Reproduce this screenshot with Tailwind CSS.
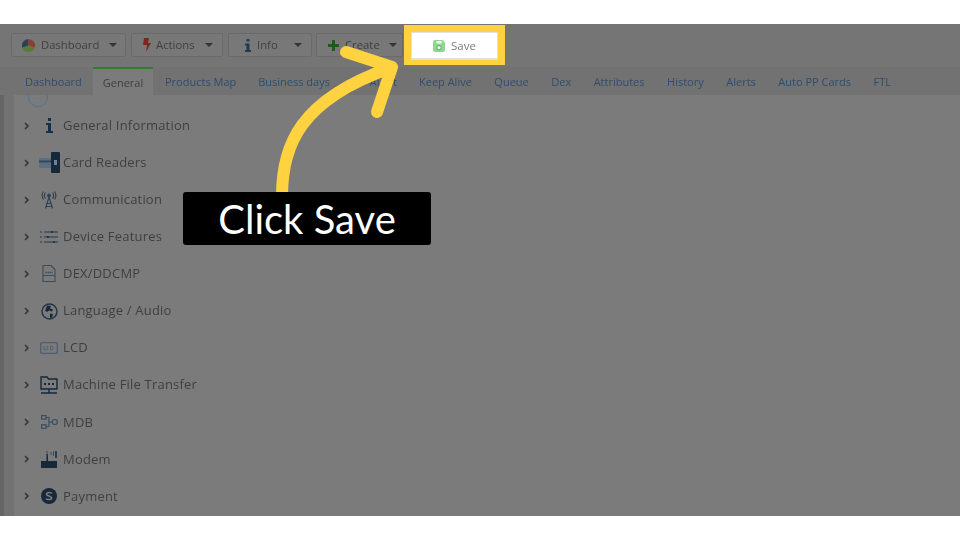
<!DOCTYPE html>
<html lang="en">
<head>
  <meta charset="UTF-8" />
  <title>Click Save</title>
  <script src="https://cdn.jsdelivr.net/npm/@tailwindcss/browser@4"></script>
</head>
<body class="bg-white">
<div class="relative w-[960px] h-[540px] overflow-hidden bg-white font-['Open_Sans',sans-serif]">
  <div class="h-[24px]"></div>

  <!-- dimmed app screenshot -->
  <div class="h-[492px] overflow-hidden bg-[#757575]">
    <div class="blur-[0.6px]">
      <!-- toolbar -->
      <div class="flex gap-[5px] pl-[11px] pt-[9px] h-[43px] text-[11.3px] text-[#3f3f3f]">
        <div class="w-[115px] h-[24px] flex items-center border border-[#6a6a6a] rounded-[2px] bg-[#787878] pl-[9px]">
          <svg class="w-[15px] h-[15px]" viewBox="0 0 16 16">
            <path d="M8 1a7 7 0 0 0-6.600 9.300L8 8z" fill="#2b3f55"/>
            <path d="M8 1v7l6.600 2.300A7 7 0 0 0 8 1z" fill="#8a4030"/>
            <path d="M1.400 10.300A7 7 0 0 0 14.600 10.300L8 8z" fill="#5a7a3c"/>
          </svg>
          <span class="ml-[5px]">Dashboard</span>
          <span class="ml-[10px] w-0 h-0 border-x-[4px] border-x-transparent border-t-[4px] border-t-[#333]"></span>
        </div>
        <div class="w-[92px] h-[24px] flex items-center border border-[#6a6a6a] rounded-[2px] bg-[#787878] pl-[11px]">
          <svg class="w-[8px] h-[14px]" viewBox="0 0 8 14"><path d="M1 0h5L5 5h3L3 14l1-7H0z" fill="#7a2a1c"/></svg>
          <span class="ml-[5px]">Actions</span>
          <span class="ml-[10px] w-0 h-0 border-x-[4px] border-x-transparent border-t-[4px] border-t-[#333]"></span>
        </div>
        <div class="w-[84px] h-[24px] flex items-center border border-[#6a6a6a] rounded-[2px] bg-[#787878] pl-[16px]">
          <svg class="w-[6px] h-[13px]" viewBox="0 0 6 13"><path d="M1.500 0h3v2.600h-3zM0 4.500h4.500v6.500H6v2H0v-2h1.500V6.500H0z" fill="#1d3a55"/></svg>
          <span class="ml-[6px]">Info</span>
          <span class="ml-[16px] w-0 h-0 border-x-[4px] border-x-transparent border-t-[4px] border-t-[#333]"></span>
        </div>
        <div class="ml-[-1px] w-[87px] h-[24px] flex items-center border border-[#6a6a6a] rounded-[2px] bg-[#787878] pl-[11px]">
          <svg class="w-[11px] h-[11px]" viewBox="0 0 11 11"><path d="M4 0h3v4h4v3H7v4H4V7H0V4h4z" fill="#1f5a1f"/></svg>
          <span class="ml-[6px]">Create</span>
          <span class="ml-[9px] w-0 h-0 border-x-[4px] border-x-transparent border-t-[4px] border-t-[#333]"></span>
        </div>
      </div>

      <!-- tabs -->
      <div class="flex items-stretch h-[28px] bg-[#727272] text-[11px] text-[#2f4d6c]">
        <span class="pl-[25px] w-[93px] pt-[7px]">Dashboard</span>
        <span class="w-[60px] border-t-2 border-[#2f7d2f] bg-[#7b7b7b] text-[#3f3f3f] text-center pt-[6px]">General</span>
        <span class="ml-[12px] pt-[7px]">Products Map</span>
        <span class="ml-[22px] pt-[7px]">Business days</span>
        <span class="ml-[22px] w-[45px] pt-[7px] text-right">Audit</span>
        <span class="ml-[22px] pt-[7px]">Keep Alive</span>
        <span class="ml-[22.500px] pt-[7px]">Queue</span>
        <span class="ml-[22.500px] pt-[7px]">Dex</span>
        <span class="ml-[22.500px] pt-[7px]">Attributes</span>
        <span class="ml-[22.500px] pt-[7px]">History</span>
        <span class="ml-[22.500px] pt-[7px]">Alerts</span>
        <span class="ml-[22.500px] pt-[7px]">Auto PP Cards</span>
        <span class="ml-[22.500px] pt-[7px]">FTL</span>
      </div>

      <!-- settings list -->
      <div class="flex h-[421px]">
        <div class="w-[4px] bg-[#656565]"></div>
        <div class="w-[10px] bg-[#727272]"></div>
        <div class="flex-1 bg-[#7b7b7b] text-[13px] text-[#3f3f3f] tracking-[0.2px]">
          <div class="h-[12px] overflow-hidden pl-[13px]">
            <svg class="w-[22px] h-[12px]" viewBox="0 0 22 12" fill="none">
              <circle cx="11" cy="2" r="9.500" stroke="#56718c"/>
              <path d="M7 3h1M10.500 3h1M14 3h1" stroke="#56718c"/>
            </svg>
          </div>

          <div class="flex items-center h-[37.100px]">
            <svg class="ml-[10px] w-[6px] h-[8px]" viewBox="0 0 6 8" fill="none"><path d="M1 1l3 3-3 3" stroke="#333" stroke-width="1.500"/></svg>
            <span class="w-[33px] pl-[5px] flex justify-center"><svg class="w-[7px] h-[15px]" viewBox="0 0 7 15"><path d="M2 0h3v3H2zM0 5h5v8h2v2H0v-2h2V7H0z" fill="#16304a"/></svg></span>
            <span>General Information</span>
          </div>
          <div class="flex items-center h-[37.100px]">
            <svg class="ml-[10px] w-[6px] h-[8px]" viewBox="0 0 6 8" fill="none"><path d="M1 1l3 3-3 3" stroke="#333" stroke-width="1.500"/></svg>
            <span class="w-[33px] pl-[5px] flex justify-center"><svg class="w-[21px] h-[21px]" viewBox="0 0 21 21"><rect x="0" y="6" width="14" height="10" rx="1" fill="#5b6f82"/><rect x="0" y="8.500" width="14" height="2" fill="#35495c"/><rect x="12" y="0" width="9" height="21" rx="1" fill="#16293b"/><rect x="15" y="8" width="3" height="5" fill="#6d8296"/></svg></span>
            <span>Card Readers</span>
          </div>
          <div class="flex items-center h-[37.100px]">
            <svg class="ml-[10px] w-[6px] h-[8px]" viewBox="0 0 6 8" fill="none"><path d="M1 1l3 3-3 3" stroke="#333" stroke-width="1.500"/></svg>
            <span class="w-[33px] pl-[5px] flex justify-center"><svg class="w-[16px] h-[18px]" viewBox="0 0 16 18" fill="none" stroke="#2f4356" stroke-width="1.200"><path d="M4.500 1.500a5 5 0 0 0 0 6M2.500 0.500a7 7 0 0 0 0 8M11.500 1.500a5 5 0 0 1 0 6M13.500 0.500a7 7 0 0 1 0 8M8 6L4.500 17.500M8 6l3.500 11.500M6 12.500h4M5 15.500h6"/><circle cx="8" cy="4.500" r="1.300" fill="#2f4356"/></svg></span>
            <span>Communication</span>
          </div>
          <div class="flex items-center h-[37.100px]">
            <svg class="ml-[10px] w-[6px] h-[8px]" viewBox="0 0 6 8" fill="none"><path d="M1 1l3 3-3 3" stroke="#333" stroke-width="1.500"/></svg>
            <span class="w-[33px] pl-[5px] flex justify-center"><svg class="w-[18px] h-[12px]" viewBox="0 0 18 12" fill="none" stroke="#24384a" stroke-width="1.200"><path d="M0 1h2M4 1h14M0 6h2M4 6h14M0 11h2M4 11h14"/><path d="M12 0v2M8 5v2M14 10v2" stroke-width="2"/></svg></span>
            <span>Device Features</span>
          </div>
          <div class="flex items-center h-[37.100px]">
            <svg class="ml-[10px] w-[6px] h-[8px]" viewBox="0 0 6 8" fill="none"><path d="M1 1l3 3-3 3" stroke="#333" stroke-width="1.500"/></svg>
            <span class="w-[33px] pl-[5px] flex justify-center"><svg class="w-[14px] h-[17px]" viewBox="0 0 14 17" fill="none" stroke="#3a4d5e" stroke-width="1.100"><path d="M1 .500h8l4 4v12H1zM1 10.500h12"/><path d="M3.500 7.500h7" stroke-width="1.500" stroke-dasharray="1.500 .5"/></svg></span>
            <span>DEX/DDCMP</span>
          </div>
          <div class="flex items-center h-[37.100px]">
            <svg class="ml-[10px] w-[6px] h-[8px]" viewBox="0 0 6 8" fill="none"><path d="M1 1l3 3-3 3" stroke="#333" stroke-width="1.500"/></svg>
            <span class="w-[33px] pl-[5px] flex justify-center"><svg class="w-[17px] h-[17px]" viewBox="0 0 17 17"><circle cx="8.500" cy="8.500" r="7.500" fill="#7b7b7b" stroke="#223648" stroke-width="1.500"/><path d="M6 2.500l4 .5-1 2.500 3 1-1 2-3-1-2 1.500-2-1.500L5 5.500zM9 10.500l3 .5-1 3.500-2 .5z" fill="#16293b"/></svg></span>
            <span>Language / Audio</span>
          </div>
          <div class="flex items-center h-[37.100px]">
            <svg class="ml-[10px] w-[6px] h-[8px]" viewBox="0 0 6 8" fill="none"><path d="M1 1l3 3-3 3" stroke="#333" stroke-width="1.500"/></svg>
            <span class="w-[33px] pl-[5px] flex justify-center"><svg class="w-[18px] h-[12px]" viewBox="0 0 18 12" fill="none" stroke="#4c5f71" stroke-width="1.300"><rect x=".7" y=".7" width="16.600" height="10.600" rx="1"/><path d="M4 4v4h2M8.500 4.300h-1.500v3.400h1.500M10.500 4v4h1.500l1-1V5l-1-1z" stroke-width=".8"/></svg></span>
            <span>LCD</span>
          </div>
          <div class="flex items-center h-[37.100px]">
            <svg class="ml-[10px] w-[6px] h-[8px]" viewBox="0 0 6 8" fill="none"><path d="M1 1l3 3-3 3" stroke="#333" stroke-width="1.500"/></svg>
            <span class="w-[33px] pl-[5px] flex justify-center"><svg class="w-[18px] h-[19px]" viewBox="0 0 18 19" fill="none" stroke="#16293b" stroke-width="1.400"><path d="M1 1h6l1.500 2H17v10H1z"/><path d="M9 13v4M1 17h16"/><path d="M4 8h2M8 8h2M12 8h2" stroke-width="2"/></svg></span>
            <span>Machine File Transfer</span>
          </div>
          <div class="flex items-center h-[37.100px]">
            <svg class="ml-[10px] w-[6px] h-[8px]" viewBox="0 0 6 8" fill="none"><path d="M1 1l3 3-3 3" stroke="#333" stroke-width="1.500"/></svg>
            <span class="w-[33px] pl-[5px] flex justify-center"><svg class="w-[17px] h-[14px]" viewBox="0 0 17 14" fill="none" stroke="#3a4d5e" stroke-width="1.200"><rect x=".6" y=".6" width="4.500" height="3.500"/><rect x=".6" y="9.800" width="4.500" height="3.500"/><circle cx="13.800" cy="7" r="2.500"/><path d="M5 2.500h3v9H5M8 7h3.500"/></svg></span>
            <span>MDB</span>
          </div>
          <div class="flex items-center h-[37.100px]">
            <svg class="ml-[10px] w-[6px] h-[8px]" viewBox="0 0 6 8" fill="none"><path d="M1 1l3 3-3 3" stroke="#333" stroke-width="1.500"/></svg>
            <span class="w-[33px] pl-[5px] flex justify-center"><svg class="w-[17px] h-[19px]" viewBox="0 0 17 19"><rect x="0" y="11" width="16" height="7" fill="#16293b"/><path d="M5.500 4h1.500v8H5.500z" fill="#16293b"/><path d="M15 1v7" stroke="#16293b" stroke-width="1.500"/><path d="M6 1v5M10 2v3M12.500 1v5" stroke="#3a4d5e"/></svg></span>
            <span>Modem</span>
          </div>
          <div class="flex items-center h-[37.100px]">
            <svg class="ml-[10px] w-[6px] h-[8px]" viewBox="0 0 6 8" fill="none"><path d="M1 1l3 3-3 3" stroke="#333" stroke-width="1.500"/></svg>
            <span class="w-[33px] pl-[5px] flex justify-center"><svg class="w-[16px] h-[16px]" viewBox="0 0 16 16"><circle cx="8" cy="8" r="8" fill="#16293b"/><path d="M11 5.500C10.500 4.300 6 3.700 5.500 5.800 5 8 11 8 10.700 10.200 10.400 12.200 5.500 11.800 5 10.500" fill="none" stroke="#7b7b7b" stroke-width="1.500"/></svg></span>
            <span>Payment</span>
          </div>
        </div>
      </div>
    </div>
  </div>

  <!-- tutorial annotations, over the screenshot -->
  <div class="absolute left-[404px] top-[25px] w-[101px] h-[40px] border-x-[7px] border-t-[7px] border-b-[5px] border-[#ffd23f] bg-[#dfe3df]">
    <div class="w-[85px] h-[25px] ml-[1px] mt-[1px] bg-white flex items-center justify-center gap-[6px] text-[11.500px] text-[#7a7a7a] blur-[0.4px]">
      <svg class="w-[12px] h-[12px]" viewBox="0 0 12 12"><path d="M2 0h7.500L12 2.500V10a2 2 0 0 1-2 2H2a2 2 0 0 1-2-2V2a2 2 0 0 1 2-2z" fill="#8fd98f"/><rect x="3.500" y="1" width="5" height="2.500" fill="#f2fbf2"/><circle cx="6" cy="7.800" r="2.200" fill="#f2fbf2" stroke="#4fa84f"/></svg>
      <span>Save</span>
    </div>
  </div>
  <svg class="absolute left-0 top-0 w-[960px] h-[540px] pointer-events-none" viewBox="0 0 960 540" fill="none" stroke="#ffd23f" stroke-width="12" stroke-linecap="round" stroke-linejoin="round">
    <path d="M282 196C282 145 300 100 390 68" stroke-linecap="butt"/>
    <path d="M346 52L392 67L377 112"/>
  </svg>
  <div class="absolute left-[183px] top-[192px] w-[248px] h-[53px] bg-black rounded-[3px] flex items-center justify-center font-['Lato',sans-serif] text-[40px] text-white">Click Save</div>
</div>
</body>
</html>
